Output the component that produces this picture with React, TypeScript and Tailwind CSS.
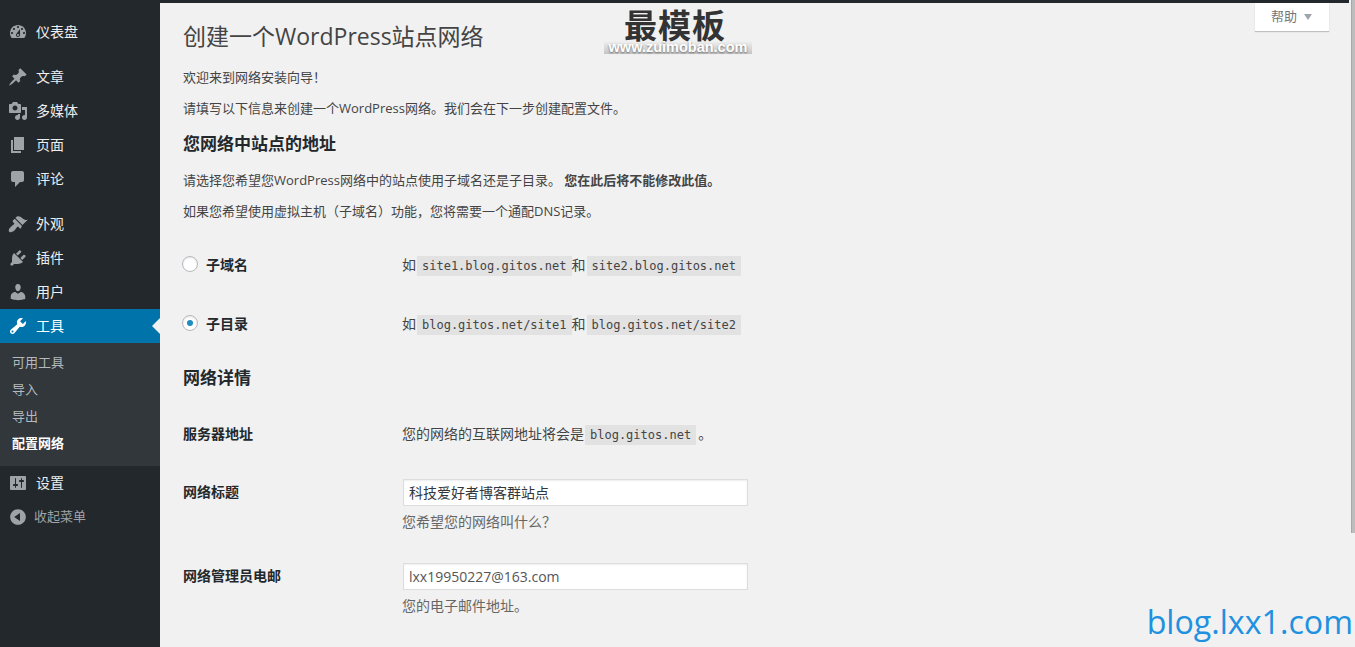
import type { ReactNode } from "react";

const cjk = "font-['Open_Sans','Noto_Sans_CJK_SC',sans-serif]";

const icons = {
  dashboard:
    "M3.76 16h12.48c1.1-1.37 1.76-3.11 1.76-5 0-4.42-3.58-8-8-8s-8 3.58-8 8c0 1.89.66 3.63 1.76 5zM10 4c.55 0 1 .45 1 1s-.45 1-1 1-1-.45-1-1 .45-1 1-1zM6 6c.55 0 1 .45 1 1s-.45 1-1 1-1-.45-1-1 .45-1 1-1zm8 0c.55 0 1 .45 1 1s-.45 1-1 1-1-.45-1-1 .45-1 1-1zm-5.37 5.55L12 7v6c0 1.1-.9 2-2 2s-2-.9-2-2c0-.57.24-1.08.63-1.45zM4 10c.55 0 1 .45 1 1s-.45 1-1 1-1-.45-1-1 .45-1 1-1zm12 0c.55 0 1 .45 1 1s-.45 1-1 1-1-.45-1-1 .45-1 1-1zm-5 3c0-.55-.45-1-1-1s-1 .45-1 1 .45 1 1 1 1-.45 1-1z",
  post: "M10.44 3.02l1.82-1.82 6.36 6.35-1.83 1.82c-1.05-.68-2.48-.57-3.41.36l-.75.75c-.92.93-1.04 2.35-.35 3.41l-1.83 1.82-2.41-2.41-2.8 2.79c-.42.42-3.38 2.71-3.8 2.29s1.86-3.39 2.28-3.81l2.79-2.79L4.1 9.36l1.83-1.82c1.05.69 2.48.57 3.4-.36l.75-.75c.93-.92 1.05-2.35.36-3.41z",
  media:
    "M13 11V4c0-.55-.45-1-1-1h-1.67L9 1H5L3.67 3H2c-.55 0-1 .45-1 1v7c0 .55.45 1 1 1h10c.55 0 1-.45 1-1zM7 4.5c1.38 0 2.5 1.12 2.5 2.5S8.38 9.5 7 9.5 4.5 8.38 4.5 7 5.62 4.5 7 4.5zM14 6h5v10.5c0 1.38-1.12 2.5-2.5 2.5S14 17.88 14 16.5s1.12-2.5 2.5-2.5c.17 0 .34.02.5.05V9h-3V6zm-4 8.05V13h2v3.5c0 1.38-1.12 2.5-2.5 2.5S7 17.88 7 16.5 8.12 14 9.5 14c.17 0 .34.02.5.05z",
  page: "M6 15V2h10v13H6zm-1 1h8v2H3V5h2v11z",
  comments:
    "M5 2h9c1.1 0 2 .9 2 2v7c0 1.1-.9 2-2 2h-2l-5 5v-5H5c-1.1 0-2-.9-2-2V4c0-1.1.9-2 2-2z",
  appearance:
    "M14.48 11.06L7.41 3.99l1.5-1.5c.5-.56 2.3-.47 3.51.32 1.21.8 1.43 1.28 2.91 2.1 1.18.64 2.45 1.26 4.45.85zm-.71.71L6.7 4.7 4.93 6.47c-.39.39-.39 1.02 0 1.41l1.06 1.06c.39.39.39 1.03 0 1.42-.6.6-1.43 1.11-2.21 1.69-.35.26-.7.53-1.01.84C1.43 13.73 0 16.45 1.3 17.75s4.03-.12 5.37-1.47c.31-.31.58-.65.84-1 .57-.78 1.08-1.61 1.69-2.21.39-.39 1.02-.39 1.41 0l1.06 1.06c.39.39 1.02.39 1.41 0z",
  plugins:
    "M13.11 4.36L9.87 7.6 8 5.73l3.24-3.24c.35-.34 1.05-.2 1.56.32.52.51.66 1.21.31 1.55zm-8 1.77l.91-1.12 9.01 9.01-1.19.84c-.71.71-2.63 1.16-3.82 1.16H6.14L4.9 17.26c-.59.59-1.54.59-2.12 0-.59-.58-.59-1.53 0-2.12l1.24-1.24v-3.88c0-1.13.4-3.19 1.09-3.89zm7.26 3.97l3.24-3.24c.34-.35 1.04-.21 1.55.31.52.51.66 1.21.31 1.55l-3.24 3.25z",
  users:
    "M10 9.25c-2.27 0-2.73-3.44-2.73-3.44C7 4.02 7.82 2 9.97 2c2.16 0 2.98 2.02 2.71 3.81 0 0-.41 3.44-2.68 3.44zm0 2.57L12.72 10c2.39 0 4.52 2.33 4.52 4.53v2.49s-3.65 1.13-7.24 1.13c-3.65 0-7.24-1.13-7.24-1.13v-2.49c0-2.25 1.94-4.48 4.47-4.48z",
  tools:
    "M16.68 9.77c-1.34 1.34-3.3 1.67-4.95.99l-5.41 6.52c-.99.99-2.59.99-3.58 0s-.99-2.59 0-3.57l6.52-5.42c-.68-1.65-.35-3.61.99-4.95 1.28-1.28 3.12-1.62 4.72-1.06l-2.89 2.89 2.82 2.82 2.86-2.87c.53 1.58.18 3.39-1.08 4.65zM3.81 16.21c.4.39 1.04.39 1.43 0 .4-.4.4-1.04 0-1.43-.39-.4-1.03-.4-1.43 0-.39.39-.39 1.03 0 1.43z",
  settings:
    "M18 16V4c0-.55-.45-1-1-1H3c-.55 0-1 .45-1 1v12c0 .55.45 1 1 1h14c.55 0 1-.45 1-1zM8 11h1c.55 0 1 .45 1 1s-.45 1-1 1H8v1.5c0 .28-.22.5-.5.5s-.5-.22-.5-.5V13H6c-.55 0-1-.45-1-1s.45-1 1-1h1V5.5c0-.28.22-.5.5-.5s.5.22.5.5V11zm5-2h-1c-.55 0-1-.45-1-1s.45-1 1-1h1V5.5c0-.28.22-.5.5-.5s.5.22.5.5V7h1c.55 0 1 .45 1 1s-.45 1-1 1h-1v5.5c0 .28-.22.5-.5.5s-.5-.22-.5-.5V9z",
  collapse:
    "M10 2.16c4.33 0 7.84 3.51 7.84 7.84s-3.51 7.84-7.84 7.84S2.16 14.33 2.16 10 5.71 2.16 10 2.16zm2 11.72V6.12L6.18 9.97z",
};

function Icon({ name, className }: { name: keyof typeof icons; className?: string }) {
  return (
    <svg viewBox="0 0 20 20" className={className} fill="currentColor">
      <path d={icons[name]} />
    </svg>
  );
}

function MenuItem({
  icon,
  label,
  active,
}: {
  icon: keyof typeof icons;
  label: string;
  active?: boolean;
}) {
  return (
    <div
      className={`relative flex h-[34px] items-center pl-[8px] text-[14px] ${
        active ? "bg-[#0073aa] text-white" : "text-[#eeeeee]"
      }`}
    >
      <Icon
        name={icon}
        className={`h-5 w-5 ${active ? "text-white" : "text-[#9ea3a8]"}`}
      />
      <span className="ml-[8px] pb-[2px]">{label}</span>
      {active && (
        <span className="absolute right-0 top-[9px] h-0 w-0 border-y-[8px] border-r-[8px] border-y-transparent border-r-[#f1f1f1]" />
      )}
    </div>
  );
}

function Sidebar() {
  return (
    <aside className="w-[160px] shrink-0 bg-[#23282d] pt-[15px]">
      <MenuItem icon="dashboard" label="仪表盘" />
      <div className="h-[11px]" />
      <MenuItem icon="post" label="文章" />
      <MenuItem icon="media" label="多媒体" />
      <MenuItem icon="page" label="页面" />
      <MenuItem icon="comments" label="评论" />
      <div className="h-[11px]" />
      <MenuItem icon="appearance" label="外观" />
      <MenuItem icon="plugins" label="插件" />
      <MenuItem icon="users" label="用户" />
      <MenuItem icon="tools" label="工具" active />
      <ul className="flex h-[123px] flex-col justify-center bg-[#32373c] pb-[4px] pl-[12px] text-[13px] text-[#b4b9be]">
        <li className="h-[27px] leading-[27px]">可用工具</li>
        <li className="h-[27px] leading-[27px]">导入</li>
        <li className="h-[27px] leading-[27px]">导出</li>
        <li className="h-[27px] font-bold leading-[27px] text-white">配置网络</li>
      </ul>
      <MenuItem icon="settings" label="设置" />
      <div className="flex h-[34px] items-center pl-[8px] text-[13px] text-[#9ea3a8]">
        <Icon name="collapse" className="h-5 w-5" />
        <span className="ml-[6px]">收起菜单</span>
      </div>
    </aside>
  );
}

function Code({ children }: { children: ReactNode }) {
  return (
    <code className="ml-[1px] bg-[#e2e2e2] px-[5px] py-[3px] font-['DejaVu_Sans_Mono',monospace] text-[12px] text-[#444444]">
      {children}
    </code>
  );
}

function CodeLine({ children }: { children: ReactNode }) {
  return <div className="pb-[2px]">{children}</div>;
}

function Row({
  label,
  className,
  children,
}: {
  label: ReactNode;
  className: string;
  children: ReactNode;
}) {
  return (
    <div className={`flex ${className}`}>
      <div className="w-[219px] shrink-0 pb-[2px] text-[14px] font-bold text-[#23282d]">{label}</div>
      <div className="flex-1 text-[14px]">{children}</div>
    </div>
  );
}

function Radio({ checked }: { checked?: boolean }) {
  return (
    <span className="-ml-[1px] mr-[8px] flex h-[16px] w-[16px] items-center justify-center rounded-full border border-[#b4b9be] bg-white shadow-[inset_0_1px_2px_rgba(0,0,0,0.1)]">
      {checked && <span className="h-[6px] w-[6px] rounded-full bg-[#1e8cbe]" />}
    </span>
  );
}

function TextBox({ value, muted }: { value: string; muted?: boolean }) {
  return (
    <div
      className={`ml-[1px] h-[27px] w-[345px] border border-[#dddddd] bg-white pl-[5px] text-[14px] leading-[25px] shadow-[inset_0_1px_2px_rgba(0,0,0,0.07)] ${
        muted ? "text-[#555555]" : "text-[#32373c]"
      }`}
    >
      {value}
    </div>
  );
}

export default function App() {
  return (
    <div className={`relative flex h-[647px] w-[1355px] overflow-hidden bg-[#f1f1f1] ${cjk}`}>
      <Sidebar />
      <main className="min-w-0 flex-1 pl-[23px] text-[13px] text-[#444444]">
        <h1 className="mt-[21px] h-[30px] text-[23px] leading-[30px] text-[#444444]">
          创建一个WordPress站点网络
        </h1>
        <p className="mt-[17px] h-[18px] leading-[18px]">欢迎来到网络安装向导！</p>
        <p className="mt-[13px] h-[18px] leading-[18px]">
          请填写以下信息来创建一个WordPress网络。我们会在下一步创建配置文件。
        </p>
        <h2 className="mt-[15px] h-[24px] text-[17px] font-bold leading-[24px] text-[#23282d]">
          您网络中站点的地址
        </h2>
        <p className="mt-[15px] h-[18px] leading-[18px]">
          请选择您希望您WordPress网络中的站点使用子域名还是子目录。 <strong>您在此后将不能修改此值。</strong>
        </p>
        <p className="mt-[13px] h-[18px] leading-[18px]">
          如果您希望使用虚拟主机（子域名）功能，您将需要一个通配DNS记录。
        </p>
        <Row
          className="mt-[35px] h-[20px] items-center"
          label={
            <span className="flex items-center">
              <Radio />
              子域名
            </span>
          }
        >
          <CodeLine>
            如<Code>site1.blog.gitos.net</Code>和<Code>site2.blog.gitos.net</Code>
          </CodeLine>
        </Row>
        <Row
          className="mt-[39px] h-[20px] items-center"
          label={
            <span className="flex items-center">
              <Radio checked />
              子目录
            </span>
          }
        >
          <CodeLine>
            如<Code>blog.gitos.net/site1</Code>和<Code>blog.gitos.net/site2</Code>
          </CodeLine>
        </Row>
        <h2 className="mt-[32px] h-[24px] text-[17px] font-bold leading-[24px] text-[#23282d]">
          网络详情
        </h2>
        <Row className="mt-[34px] h-[20px] items-center" label="服务器地址">
          <CodeLine>
            您的网络的互联网地址将会是<Code>blog.gitos.net</Code>
            <span className="ml-[2px]">。</span>
          </CodeLine>
        </Row>
        <Row className="mt-[35px] items-center" label="网络标题">
          <TextBox value="科技爱好者博客群站点" />
        </Row>
        <p className="ml-[219px] mt-[6px] h-[20px] text-[14px] leading-[20px] text-[#666666]">您希望您的网络叫什么？</p>
        <Row className="mt-[31px] items-center" label="网络管理员电邮">
          <TextBox value="lxx19950227@163.com" muted />
        </Row>
        <p className="ml-[219px] mt-[6px] h-[20px] text-[14px] leading-[20px] text-[#666666]">您的电子邮件地址。</p>
      </main>

      {/* top strip, scroll edge, help tab and the two watermarks sit over the page */}
      <div className="absolute left-0 right-[6px] top-0 h-[3px] bg-[#23282d]" />
      <div className="absolute right-0 top-0 h-[533px] w-[4px] border-l border-[#a8a8a8] bg-[#bdbdbd]" />
      <div className="absolute right-[26px] top-[3px] flex h-[28px] w-[74px] items-center justify-center gap-[7px] bg-white pr-[1px] text-[13px] text-[#72777c] shadow-[0_1px_1px_rgba(0,0,0,0.2)]">
        帮助
        <span className="h-0 w-0 border-x-[4.5px] border-t-[6px] border-x-transparent border-t-[#a0a5aa]" />
      </div>
      <div className="absolute left-[600px] top-[7px] flex w-[150px] flex-col items-center">
        <span className="font-['Noto_Sans_CJK_SC',serif] text-[33px] font-bold leading-[34px] tracking-[1px] text-[#333333]">最模板</span>
      </div>
      <div className="absolute left-[604px] top-[41px] w-[148px] bg-gradient-to-b from-transparent to-[#c4c4c4] text-center font-['Liberation_Sans',sans-serif] text-[14.5px] font-bold leading-[13px] text-white [text-shadow:0_1px_2px_#666666]">
        www.zuimoban.com
      </div>
      <div className="absolute bottom-[3px] right-[2px] font-['Open_Sans',sans-serif] text-[32.2px] leading-[44px] text-[#2090e0]">
        blog.lxx1.com
      </div>
    </div>
  );
}
